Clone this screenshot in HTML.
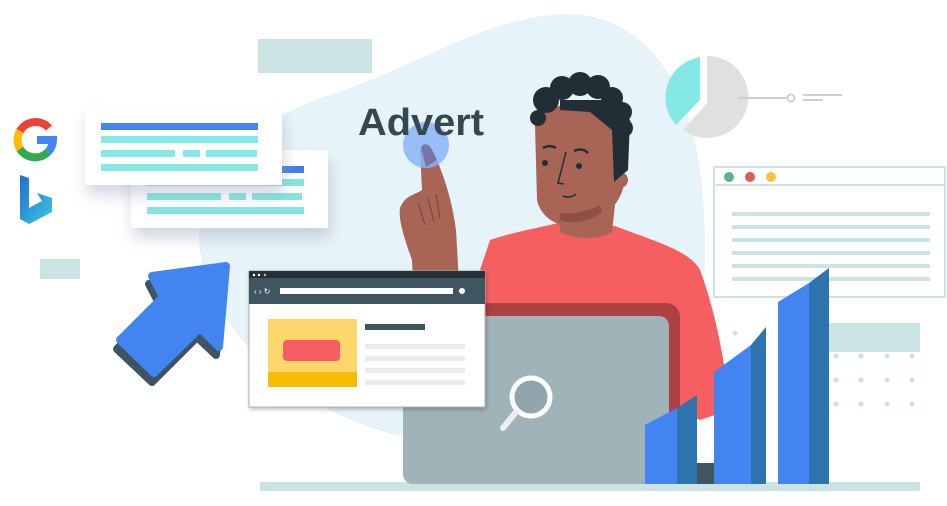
<!DOCTYPE html>
<html><head><meta charset="utf-8"><style>
html,body{margin:0;padding:0;background:#fff;width:947px;height:506px;overflow:hidden}
svg{display:block}
</style></head><body>
<svg width="947" height="506" viewBox="0 0 947 506" xmlns="http://www.w3.org/2000/svg">
<defs>
<filter id="sh" x="-20%" y="-20%" width="150%" height="170%"><feDropShadow dx="2" dy="10" stdDeviation="8" flood-color="#9aa6b8" flood-opacity="0.45"/></filter>
<filter id="sh2" x="-10%" y="-10%" width="130%" height="130%"><feDropShadow dx="1" dy="2" stdDeviation="2" flood-color="#000" flood-opacity="0.25"/></filter>
<linearGradient id="bg1" x1="0" y1="0" x2="1" y2="1"><stop offset="0" stop-color="#1f6fd1"/><stop offset="1" stop-color="#3fc6e0"/></linearGradient>
</defs>
<path d="M200 250 C190 180 250 120 330 95 C420 65 480 20 560 14 C640 10 690 80 700 170 C712 260 700 350 690 400 C650 450 520 450 420 440 C300 420 210 330 200 250Z" fill="#E6F3F8"/>
<rect x="258" y="39" width="114" height="34" fill="#CCE3E3"/>
<rect x="40" y="259" width="40" height="20" fill="#CCE3E3"/>
<rect x="260" y="482" width="660" height="9" fill="#CCE3E3"/>
<rect x="826" y="323" width="94" height="29" fill="#CCE3E3"/>
<g fill="#CCE3E3">
<circle cx="735" cy="333" r="2.5"/>
<circle cx="836" cy="356" r="2.5"/><circle cx="861" cy="356" r="2.5"/><circle cx="887" cy="356" r="2.5"/><circle cx="912" cy="356" r="2.5"/>
<circle cx="836" cy="380" r="2.5"/><circle cx="861" cy="380" r="2.5"/><circle cx="887" cy="380" r="2.5"/><circle cx="912" cy="380" r="2.5"/>
<circle cx="836" cy="404" r="2.5"/><circle cx="861" cy="404" r="2.5"/><circle cx="887" cy="404" r="2.5"/><circle cx="912" cy="404" r="2.5"/>
</g>
<g transform="translate(35,140)" fill="none" stroke-width="8">
<path d="M14 -12 A18 18 0 0 0 -15 -9" stroke="#EA4335"/>
<path d="M-15 -9 A18 18 0 0 0 -15 9" stroke="#FBBC05"/>
<path d="M-15 9 A18 18 0 0 0 13 12" stroke="#34A853"/>
<path d="M13 12 A18 18 0 0 0 18 0 L2 0" stroke="#4285F4"/>
</g>
<path d="M20 175 L29 178 L29 208 L42 201 L37 193 L52 198 L52 212 L29 224 L20 219Z" fill="url(#bg1)"/>
<g filter="url(#sh)"><rect x="131" y="150" width="197" height="78" fill="#fff"/></g>
<rect x="147" y="166" width="157" height="7" fill="#3F7DE8"/>
<rect x="147" y="179" width="157" height="7" fill="#84E4E0"/>
<rect x="147" y="193" width="74" height="7" fill="#84E4E0"/><rect x="229" y="193" width="17" height="7" fill="#84E4E0"/><rect x="252" y="193" width="50" height="7" fill="#84E4E0"/>
<rect x="147" y="207" width="157" height="7" fill="#84E4E0"/>
<g filter="url(#sh)"><rect x="85" y="108" width="197" height="77" fill="#fff"/></g>
<rect x="101" y="123" width="157" height="7" fill="#4285F0"/>
<rect x="101" y="136" width="157" height="7" fill="#84E8E4"/>
<rect x="101" y="150" width="74" height="7" fill="#84E8E4"/><rect x="183" y="150" width="17" height="7" fill="#84E8E4"/><rect x="206" y="150" width="51" height="7" fill="#84E8E4"/>
<rect x="101" y="164" width="157" height="7" fill="#84E8E4"/>
<path d="M149 284 L224 273 L216 355 L197 337 L152 382 L117 349 L160 305Z" fill="#3D5560" stroke="#3D5560" stroke-width="8" stroke-linejoin="round"/>
<path d="M152 276 L226 266 L219 347 L200 328 L154 373 L120 340 L163 297Z" fill="#4285F0" stroke="#4285F0" stroke-width="8" stroke-linejoin="round"/>
<path d="M470 300 L490 240 C520 230 555 225 560 222 L615 226 C650 240 690 250 700 270 C715 310 725 360 730 410 L700 420 L480 330Z" fill="#F55F61"/>
<path d="M558 200 L615 205 L612 232 C600 240 575 240 560 232Z" fill="#A86556"/>
<path d="M535 125 C540 100 600 95 620 120 L625 180 C620 210 600 220 575 225 C555 228 540 215 537 200Z" fill="#A86556"/>
<circle cx="620" cy="180" r="8" fill="#A86556"/>
<path d="M560 213 C575 215 590 210 600 205 L602 212 C590 222 570 225 560 220Z" fill="#8E4F46"/>
<g fill="#212E36">
<circle cx="546" cy="100" r="13"/><circle cx="562" cy="88" r="12"/><circle cx="580" cy="84" r="12"/><circle cx="598" cy="87" r="12"/><circle cx="612" cy="98" r="11"/><circle cx="622" cy="112" r="10"/><circle cx="624" cy="128" r="9"/><circle cx="538" cy="118" r="8"/>
<path d="M560 100 L615 100 L630 120 L628 170 L614 182 L612 130 L590 112 L560 110Z"/>
</g>
<circle cx="545" cy="163" r="3" fill="#212E36"/><circle cx="579" cy="166" r="3" fill="#212E36"/>
<path d="M543 148 C548 145 553 146 556 148 M574 151 C580 148 585 150 588 153" stroke="#212E36" stroke-width="2.5" fill="none"/>
<path d="M566 152 L558 183 L564 184 M563 196 C568 198 573 197 576 194" stroke="#212E36" stroke-width="1.5" fill="none"/>
<path d="M420 150 C426 140 434 150 437 160 C445 180 452 200 456 230 L460 300 L414 300 L412 260 C405 240 398 220 400 208 C405 195 415 195 422 190Z" fill="#A86556"/>
<path d="M418 203 L425 225 M428 198 L434 222 M436 194 L440 218" stroke="#7a4038" stroke-width="1" fill="none"/>
<circle cx="426" cy="145" r="23" fill="#8AB4F8" opacity="0.85"/>
<path d="M421 148 C423 142 430 143 433 152 L437 160 L426 167Z" fill="#7774A8"/>
<text x="358" y="135" font-family="Liberation Sans, sans-serif" font-weight="bold" font-size="38" fill="#37474F" textLength="126" lengthAdjust="spacingAndGlyphs">Advert</text>
<rect x="415" y="303" width="265" height="175" rx="14" fill="#AB4142"/>
<rect x="403" y="316" width="266" height="168" rx="10" fill="#9FB3B8"/>
<circle cx="531" cy="397" r="19" fill="#8FA5AB" stroke="#fff" stroke-width="5"/>
<path d="M516 412 L503 428" stroke="#ECEFF1" stroke-width="6" stroke-linecap="round"/>
<g filter="url(#sh2)"><rect x="249" y="271" width="236" height="136" fill="#fff" stroke="#b0b0b0" stroke-width="1"/></g>
<rect x="249" y="271" width="236" height="7" fill="#263238"/>
<rect x="249" y="278" width="236" height="26" fill="#3F5660"/>
<circle cx="254" cy="275" r="1.2" fill="#fff"/><circle cx="259" cy="275" r="1.2" fill="#fff"/><circle cx="265" cy="275" r="1.2" fill="#FBC13D"/>
<text x="254" y="294" font-family="Liberation Sans, sans-serif" font-size="8" fill="#fff">‹ › ↻</text>
<rect x="280" y="288" width="173" height="6" fill="#fff"/>
<circle cx="462" cy="291" r="3" fill="#fff"/>
<rect x="268" y="319" width="89" height="53" fill="#FFD66B"/>
<rect x="268" y="372" width="89" height="15" fill="#F9BC05"/>
<rect x="283" y="340" width="57" height="21" rx="4" fill="#F55F61"/>
<rect x="365" y="324" width="60" height="6" fill="#3F5660"/>
<g fill="#EBEBEB"><rect x="365" y="344" width="100" height="5"/><rect x="365" y="356" width="100" height="5"/><rect x="365" y="368" width="100" height="5"/><rect x="365" y="380" width="100" height="5"/></g>
<path d="M707 56 A41 41 0 1 1 683 130 L707 103Z" fill="#E0E0E0"/>
<path d="M700 57 L700 100 L676 125 A41 41 0 0 1 700 57Z" fill="#84E8E4"/>
<path d="M738 98 L787 98" stroke="#CFCFCF" stroke-width="2"/>
<circle cx="791" cy="98" r="3.5" fill="#fff" stroke="#CFCFCF" stroke-width="2"/>
<path d="M803 95 L842 95 M803 100 L823 100" stroke="#CFCFCF" stroke-width="2"/>
<rect x="714" y="167" width="231" height="130" fill="#fff" stroke="#CCE3E3" stroke-width="2"/>
<line x1="714" y1="185" x2="945" y2="185" stroke="#CCE3E3" stroke-width="2"/>
<circle cx="729" cy="177" r="5" fill="#5FB08E"/><circle cx="750" cy="177" r="5" fill="#E0585C"/><circle cx="771" cy="177" r="5" fill="#FBC13D"/>
<g fill="#CCE3E3"><rect x="732" y="212" width="198" height="4"/><rect x="732" y="225" width="198" height="4"/><rect x="732" y="238" width="198" height="4"/><rect x="732" y="251" width="198" height="4"/><rect x="732" y="264" width="198" height="4"/><rect x="732" y="277" width="198" height="4"/></g>
<rect x="695" y="463" width="20" height="21" fill="#3F5660"/>
<path d="M645 425 L677 408 L677 484 L645 484Z" fill="#4285F0"/>
<path d="M677 408 L697 395 L697 484 L677 484Z" fill="#2D74AE"/>
<path d="M714 372 L751 345 L751 484 L714 484Z" fill="#4285F0"/>
<path d="M751 345 L766 327 L766 484 L751 484Z" fill="#2D74AE"/>
<path d="M778 302 L809 283 L809 484 L778 484Z" fill="#4285F0"/>
<path d="M809 283 L829 268 L829 484 L809 484Z" fill="#2D74AE"/>
</svg>
</body></html>
